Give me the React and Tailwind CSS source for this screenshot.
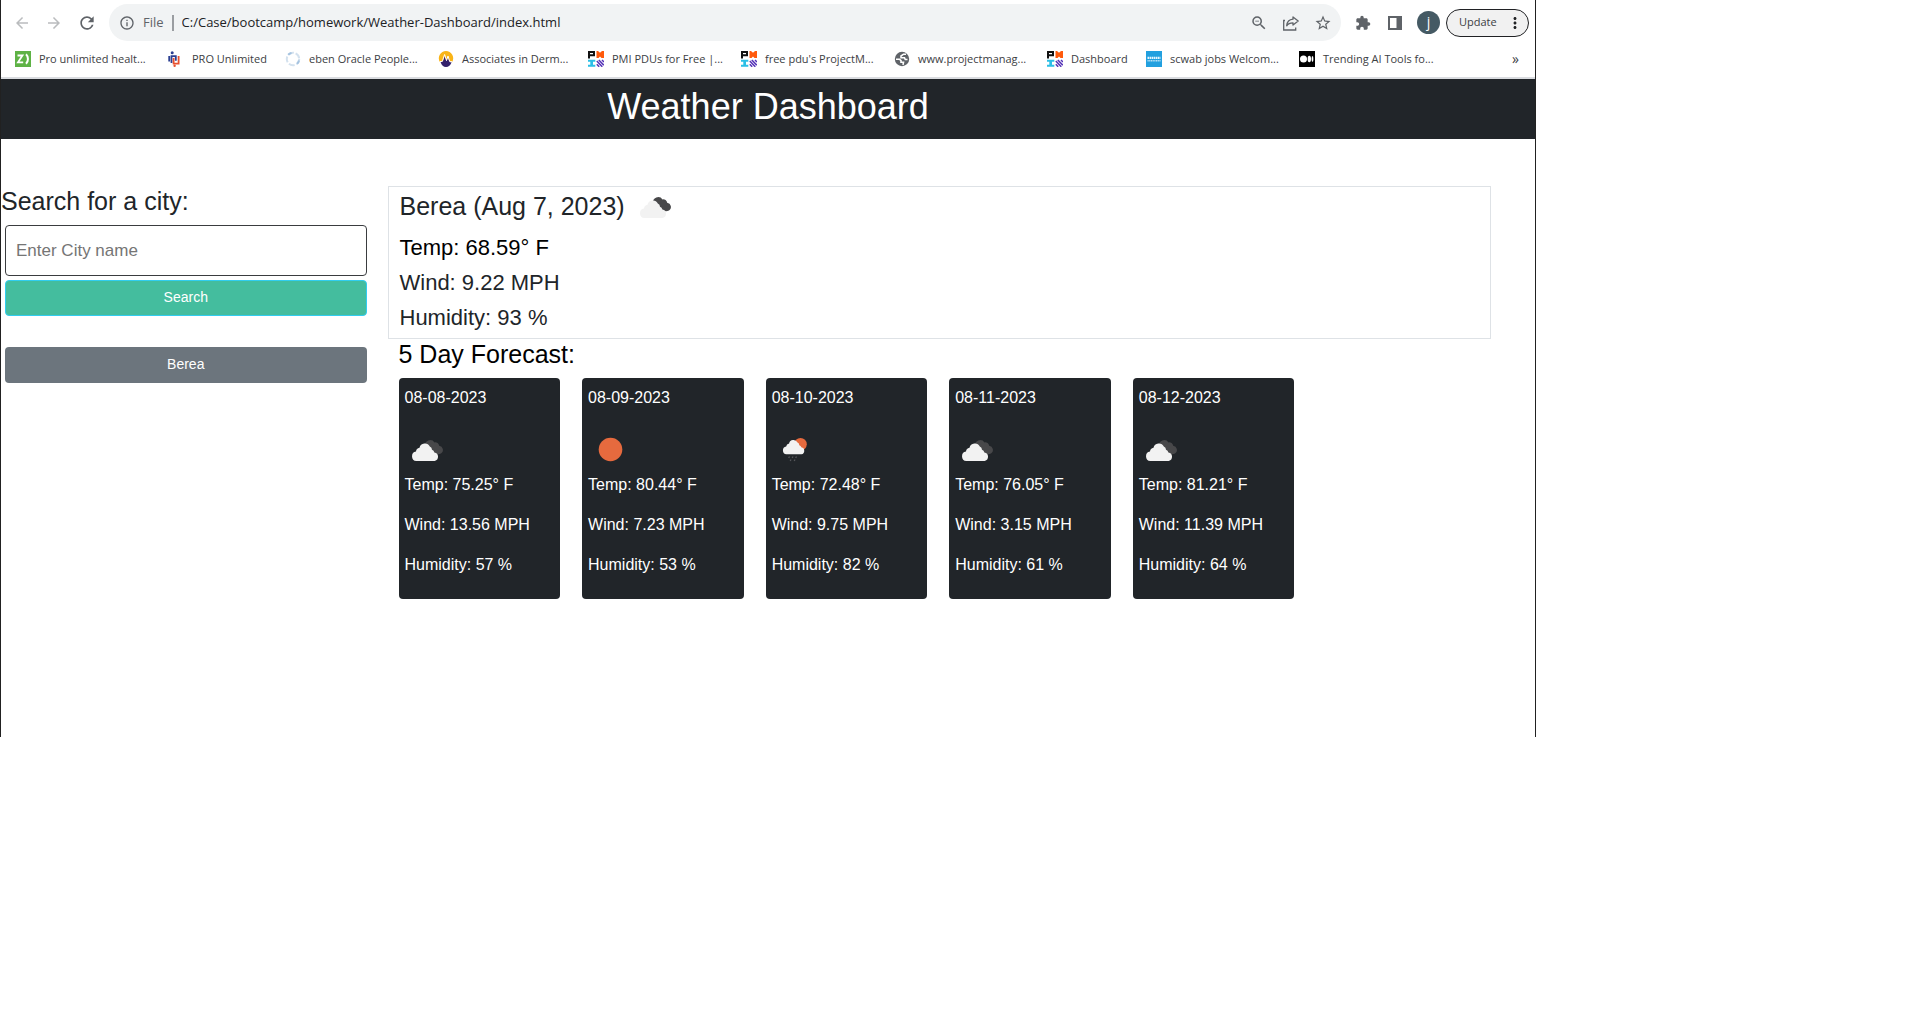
import {
  MdArrowBack,
  MdArrowForward,
  MdRefresh,
  MdInfoOutline,
  MdZoomOut,
  MdStarOutline,
  MdExtension,
  MdMoreVert,
} from "react-icons/md";

function ZFavicon() {
  return (
    <svg viewBox="0 0 16 16" className="size-4" aria-hidden="true">
      <rect width="16" height="16" fill="#5eb245" />
      <path d="M2.5 4.5h5L3 11.3h5.2" fill="none" stroke="#fff" strokeWidth="1.8" />
      <path d="M11 3.2c2.6 2.4 2.6 7 0 9.600" fill="none" stroke="#fff" strokeWidth="2" />
    </svg>
  );
}

function ProFavicon() {
  return (
    <svg viewBox="0 0 16 16" className="size-4" aria-hidden="true">
      <path d="M1.200 5v5.500M3.500 12V5.200h4.300v4.500" fill="none" stroke="#2b3f92" strokeWidth="1.8" />
      <path d="M5.600 7v5.600h5V5" fill="none" stroke="#e8502f" strokeWidth="1.800" />
      <circle cx="4.200" cy="1.700" r="1.500" fill="#2b3f92" />
      <circle cx="6.600" cy="14.700" r="1.200" fill="#e8502f" />
    </svg>
  );
}

function RingFavicon() {
  return (
    <svg viewBox="0 0 16 16" className="size-4" aria-hidden="true">
      <circle cx="8" cy="8" r="6.200" fill="none" stroke="#d3e1ee" strokeWidth="2" strokeDasharray="6 1.800" />
      <path d="M3.200 3.800A6.200 6.200 0 0 1 6.500 2M14 9.500a6.200 6.200 0 0 1-2 3.300" fill="none" stroke="#a5c3e0" strokeWidth="2" />
    </svg>
  );
}

function DermFavicon() {
  return (
    <svg viewBox="0 0 16 16" className="size-4" aria-hidden="true">
      <path d="M8 0a7.300 7.300 0 0 1 6.200 11L8 9l-6.200 2A7.300 7.300 0 0 1 8 0z" fill="#f9b417" />
      <path d="M2.600 11c1.600.4 2.400-.2 2.800-2L6.800 5l1.700 5L10 6.500l1 3.500c.4 1.200 1.200 1.500 2.600 1.200-1 3-3 4.800-5.600 4.800s-4.400-1.800-5.400-5z" fill="#33206b" />
      <path d="M1.800 10.500c2 .5 2.800-.5 3.300-2.500L6.600 3.500l1.900 6L10 5l1.200 4c.5 1.500 1.300 2 3 1.500" fill="none" stroke="#fff" strokeWidth="1" />
    </svg>
  );
}

function PmFavicon() {
  return (
    <svg viewBox="0 0 16 16" className="size-4" aria-hidden="true">
      <path d="M1 7.500V1h5v3.200H1" fill="none" stroke="#111" strokeWidth="2" />
      <path d="M8.500 0l1.500 0l2 1.800L14 0h2v7h-2.500L12 5.500 10.500 7h-2z" fill="#ff5a0c" />
      <path d="M0 8.800h7.300v2H5v3h2.300v2H0v-2h2.300v-3H0z" fill="#2bbfe6" />
      <path d="M8.800 10l5.500 5.800M8.800 13.300l2.400 2.500M10.800 9l5 5.200M14 9l2 2" stroke="#5533b8" strokeWidth="1.500" />
    </svg>
  );
}

function GlobeFavicon() {
  return (
    <svg viewBox="0 0 16 16" className="size-4" aria-hidden="true">
      <circle cx="8" cy="8" r="7.200" fill="#5f6368" />
      <path d="M12 3.200H9.500L7 5v1.800h3.500l.8 1.700h2.200M2 8.200h3.500l1.500 1.500v1.500H9.500l-.5 2.600" fill="none" stroke="#fff" strokeWidth="1.600" />
    </svg>
  );
}

function SchwabFavicon() {
  return (
    <svg viewBox="0 0 16 16" className="size-4" aria-hidden="true">
      <rect width="16" height="16" fill="#22a0df" />
      <path d="M1.500 6.800h13" stroke="#e6f5fc" strokeWidth="2.200" strokeDasharray="1.600 .5" />
      <path d="M1.500 9.800h13" stroke="#b9e1f5" strokeWidth="1.500" strokeDasharray="1.200 .5" />
    </svg>
  );
}

function MediumFavicon() {
  return (
    <svg viewBox="0 0 16 16" className="size-4" aria-hidden="true">
      <rect width="16" height="16" fill="#000" />
      <circle cx="4.500" cy="8" r="3.500" fill="#fff" />
      <ellipse cx="10.300" cy="8" rx="1.700" ry="3.300" fill="#fff" />
      <ellipse cx="13.500" cy="8" rx="0.900" ry="3" fill="#fff" />
    </svg>
  );
}

function ShareIcon() {
  return (
    <svg viewBox="0 0 18 18" className="size-[18px]" fill="none" stroke="#5f6368" strokeWidth="1.300" aria-hidden="true">
      <path d="M3 6.500H1.700v9.500h12v-2.500" />
      <path d="M11 3l5.200 4-5.200 4V8.800c-3 0-5 .8-6.300 3C5 8.200 7.200 5.500 11 5.200z" strokeLinejoin="round" />
    </svg>
  );
}

function SidePanelIcon() {
  return (
    <svg viewBox="0 0 16 16" className="size-4" aria-hidden="true">
      <path fillRule="evenodd" fill="#5f6368" d="M1 1h14v14H1zM3 3v10h6.500V3z" />
    </svg>
  );
}

function CloudShape({ fill }) {
  return (
    <path
      d="M4.800 20.500A4.800 4.800 0 0 1 4.500 11 4.300 4.300 0 0 1 8 7.200a5.500 5.500 0 0 1 10.300-1.200 3.600 3.600 0 0 1 2.200 3.300 3.600 3.600 0 0 1 2.400 2.600 4.400 4.400 0 0 1 .3 8.600z"
      fill={fill}
    />
  );
}

function CloudsIcon() {
  return (
    <svg viewBox="0 0 45 45" className="size-[45px]" aria-label="Broken clouds" role="img">
      <path d="M20 19a5.200 5.200 0 0 1 9.500-3.600 4 4 0 0 1 4.700 3.400A4.200 4.200 0 0 1 36 26.500c-2 1-4 1-6 0z" fill="#48484a" />
      <g transform="translate(6.500 13.500)">
        <CloudShape fill="#f2f2f2" />
      </g>
    </svg>
  );
}

function SunIcon() {
  return (
    <svg viewBox="0 0 45 45" className="size-[45px]" aria-label="Clear sky" role="img">
      <circle cx="22.500" cy="22.500" r="11.800" fill="#e66a3e" />
    </svg>
  );
}

function RainIcon() {
  return (
    <svg viewBox="0 0 45 45" className="size-[45px]" aria-label="Rain" role="img">
      <circle cx="28.500" cy="17.300" r="6.300" fill="#e66a3e" />
      <g transform="translate(10.500 10.500) scale(.82)">
        <CloudShape fill="#f2f2f2" />
      </g>
      <path d="M17.500 29.500l-.8 1.500M21 29.500l-.8 1.500M24.500 29.500l-.8 1.500M19 32.500l-.8 1.500M23 32.500l-.8 1.500" stroke="#55565a" strokeWidth="1.300" />
    </svg>
  );
}

const bookmarks = [
  { label: "Pro unlimited healt...", Icon: ZFavicon, width: "w-[153px]" },
  { label: "PRO Unlimited", Icon: ProFavicon, width: "w-[117px]" },
  { label: "eben Oracle People...", Icon: RingFavicon, width: "w-[153px]" },
  { label: "Associates in Derm...", Icon: DermFavicon, width: "w-[150px]" },
  { label: "PMI PDUs for Free |...", Icon: PmFavicon, width: "w-[153px]" },
  { label: "free pdu's ProjectM...", Icon: PmFavicon, width: "w-[153px]" },
  { label: "www.projectmanag...", Icon: GlobeFavicon, width: "w-[153px]" },
  { label: "Dashboard", Icon: PmFavicon, width: "w-[99px]" },
  { label: "scwab jobs Welcom...", Icon: SchwabFavicon, width: "w-[153px]" },
  { label: "Trending AI Tools fo...", Icon: MediumFavicon, width: "w-[153px]" },
];

const forecast = [
  { date: "08-08-2023", Icon: CloudsIcon, temp: "75.25", wind: "13.56", humidity: 57 },
  { date: "08-09-2023", Icon: SunIcon, temp: "80.44", wind: "7.23", humidity: 53 },
  { date: "08-10-2023", Icon: RainIcon, temp: "72.48", wind: "9.75", humidity: 82 },
  { date: "08-11-2023", Icon: CloudsIcon, temp: "76.05", wind: "3.15", humidity: 61 },
  { date: "08-12-2023", Icon: CloudsIcon, temp: "81.21", wind: "11.39", humidity: 64 },
];

function BrowserBar() {
  return (
    <div className="border-b-2 border-[#dadce0] font-['Open_Sans',sans-serif] text-[#3c4043]">
      <div className="flex items-center pt-1 pr-1.5 text-[#5f6368]">
        <div className="flex w-[108px] shrink-0 items-center gap-3.5 pl-3">
          <button type="button" aria-label="Back" className="text-[#babcbe]"><MdArrowBack size={18} /></button>
          <button type="button" aria-label="Forward" className="text-[#babcbe]"><MdArrowForward size={18} /></button>
          <button type="button" aria-label="Reload"><MdRefresh size={20} /></button>
        </div>
        <div className="flex h-[37px] min-w-0 flex-1 items-center rounded-full bg-[#f1f3f4] pr-[9px] pl-2.5">
          <MdInfoOutline size={16} className="shrink-0" />
          <span className="ml-2 text-[13px]">File</span>
          <span className="ml-2 h-4 w-0.5 bg-[#9a9da1]" />
          <input
            aria-label="Address"
            defaultValue="C:/Case/bootcamp/homework/Weather-Dashboard/index.html"
            className="ml-2 min-w-0 flex-1 bg-transparent text-[13px] text-[#202124] outline-none"
          />
          <div className="flex shrink-0 items-center gap-3.5">
            <button type="button" aria-label="Zoom"><MdZoomOut size={18} /></button>
            <button type="button" aria-label="Share"><ShareIcon /></button>
            <button type="button" aria-label="Bookmark"><MdStarOutline size={18} /></button>
          </div>
        </div>
        <div className="ml-3.5 flex shrink-0 items-center">
          <button type="button" aria-label="Extensions"><MdExtension size={16} /></button>
          <button type="button" aria-label="Side panel" className="ml-4"><SidePanelIcon /></button>
          <button type="button" aria-label="Profile" className="ml-3.5 flex size-[23px] items-center justify-center rounded-full bg-[#455a64] pb-0.5 text-sm text-white">j</button>
          <button type="button" className="ml-1.5 flex h-7 w-[83px] items-center justify-between rounded-full border border-[#202124] bg-[#f1f1f1] pr-1 pl-3 text-[11px] text-[#3c4043]">
            Update
            <MdMoreVert size={18} className="text-[#202124]" />
          </button>
        </div>
      </div>
      <nav aria-label="Bookmarks" className="flex h-9 items-center overflow-hidden pr-4 pl-3.5 text-[11px]">
        {bookmarks.map(({ label, Icon, width }) => (
          <a key={label} href="#" className={"flex shrink-0 items-center gap-2 whitespace-nowrap " + width}>
            <Icon />
            {label}
          </a>
        ))}
        <button type="button" aria-label="More bookmarks" className="ml-auto text-sm">»</button>
      </nav>
    </div>
  );
}

function SearchPanel() {
  return (
    <aside className="w-1/4 shrink-0">
      <label htmlFor="city" className="block text-[25px] leading-[30px]">Search for a city:</label>
      <div className="mt-[9px] flex flex-col pr-[18px] pl-1 text-sm">
        <input
          id="city"
          placeholder="Enter City name"
          className="h-[51px] rounded border border-[#3a3c3f] px-2.5 text-[17px] placeholder:text-[#757575]"
        />
        <button type="button" className="mt-1 h-9 rounded border border-[#31cdf0] bg-[#44bd9e] pb-0.5 text-white">Search</button>
        <button type="button" className="mt-[31px] h-9 rounded bg-[#6c757d] pb-0.5 text-white">Berea</button>
      </div>
    </aside>
  );
}

function CurrentWeather() {
  return (
    <section className="border border-[#dee2e6] px-[11px] pt-1 pb-[3px] text-[22px] leading-[35px]">
      <div className="mb-[9px] flex h-[30px] items-center">
        <h2 className="text-[25px] leading-[30px]">Berea (Aug 7, 2023)</h2>
        <span className="ml-2"><CloudsIcon /></span>
      </div>
      <p className="text-black">Temp: 68.59° F</p>
      <p>Wind: 9.22 MPH</p>
      <p>Humidity: 93 %</p>
    </section>
  );
}

function ForecastCard({ day }) {
  const { Icon } = day;
  return (
    <li className="rounded bg-[#212529] px-1.5 pt-2.5 pb-6 text-base leading-5 whitespace-nowrap text-white">
      <h3>{day.date}</h3>
      <div className="mt-[19px] mb-[3px]"><Icon /></div>
      <div className="flex flex-col gap-5">
        <p>Temp: {day.temp}° F</p>
        <p>Wind: {day.wind} MPH</p>
        <p>Humidity: {day.humidity} %</p>
      </div>
    </li>
  );
}

export default function App() {
  return (
    <div className="min-h-screen bg-white">
      <div className="w-4/5 border-x border-[#212121] pb-[138px] font-['Liberation_Sans',Arial,sans-serif] text-[#212529]">
        <BrowserBar />
        <header className="bg-[#212529] pt-1.5 pb-[11px] text-center text-white">
          <h1 className="text-4xl leading-[43px]">Weather Dashboard</h1>
        </header>
        <div className="mt-[47px] flex">
          <SearchPanel />
          <main className="mr-11 ml-[3px] min-w-0 flex-1">
            <CurrentWeather />
            <section className="pl-[11px]">
              <h2 className="mb-[9px] text-[25px] leading-[30px] text-black">5 Day Forecast:</h2>
              <ul className="grid w-[82%] grid-cols-5 gap-[22px]">
                {forecast.map((day) => (
                  <ForecastCard key={day.date} day={day} />
                ))}
              </ul>
            </section>
          </main>
        </div>
      </div>
    </div>
  );
}
